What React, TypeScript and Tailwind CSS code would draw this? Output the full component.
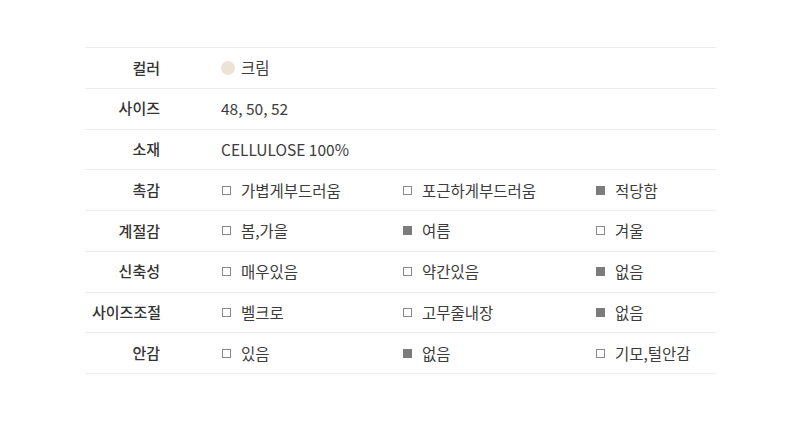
const font = { fontFamily: '"Noto Sans CJK KR", "Noto Sans", sans-serif' }

type Opt = { label: string; on: boolean }

const rows: { label: string; value?: string; color?: boolean; opts?: Opt[] }[] = [
    { label: "컬러", value: "크림", color: true },
    { label: "사이즈", value: "48, 50, 52" },
    { label: "소재", value: "CELLULOSE 100%" },
    { label: "촉감", opts: [{ label: "가볍게부드러움", on: false }, { label: "포근하게부드러움", on: false }, { label: "적당함", on: true }] },
    { label: "계절감", opts: [{ label: "봄,가을", on: false }, { label: "여름", on: true }, { label: "겨울", on: false }] },
    { label: "신축성", opts: [{ label: "매우있음", on: false }, { label: "약간있음", on: false }, { label: "없음", on: true }] },
    { label: "사이즈조절", opts: [{ label: "벨크로", on: false }, { label: "고무줄내장", on: false }, { label: "없음", on: true }] },
    { label: "안감", opts: [{ label: "있음", on: false }, { label: "없음", on: true }, { label: "기모,털안감", on: false }] },
]

function Check({ on }: { on: boolean }) {
    return on
        ? <span className="block w-[9px] h-[9px] bg-[#7b7b7b]" />
        : <span className="block w-[9px] h-[9px] border border-[#8a8a8a] bg-white" />
}

export default function App() {

    return (

        <div className="w-[800px] h-[435px] bg-white pt-[47px] px-[85px]" style={font}>

            <div className="w-[631px] border-t border-[#ececec]">

                {rows.map((r) => (
                    <div key={r.label} className="flex items-center h-[40.75px] border-b border-[#ececec]">

                        {/* label */}
                        <div className="w-[136px] shrink-0 pl-[7px] pr-[61px] text-right whitespace-nowrap text-[15px] font-medium text-[#333]">
                            {r.label}
                        </div>

                        {/* value */}
                        {r.opts ? (
                            <div className="grid grid-cols-[181px_193px_1fr] flex-1 text-[15.5px] text-[#3c3c3c]">
                                {r.opts.map((o, i) => (
                                    <div key={i} className="flex items-center gap-[10px] pl-[1px]">
                                        <Check on={o.on} />
                                        <span>{o.label}</span>
                                    </div>
                                ))}
                            </div>
                        ) : (
                            <div className="flex items-center gap-[6px] text-[15.5px] text-[#3c3c3c]">
                                {r.color && <span className="block w-[14px] h-[14px] rounded-full bg-[#ebe3d5]" />}
                                <span>{r.value}</span>
                            </div>
                        )}

                    </div>
                ))}

            </div>

        </div>

    )

}
